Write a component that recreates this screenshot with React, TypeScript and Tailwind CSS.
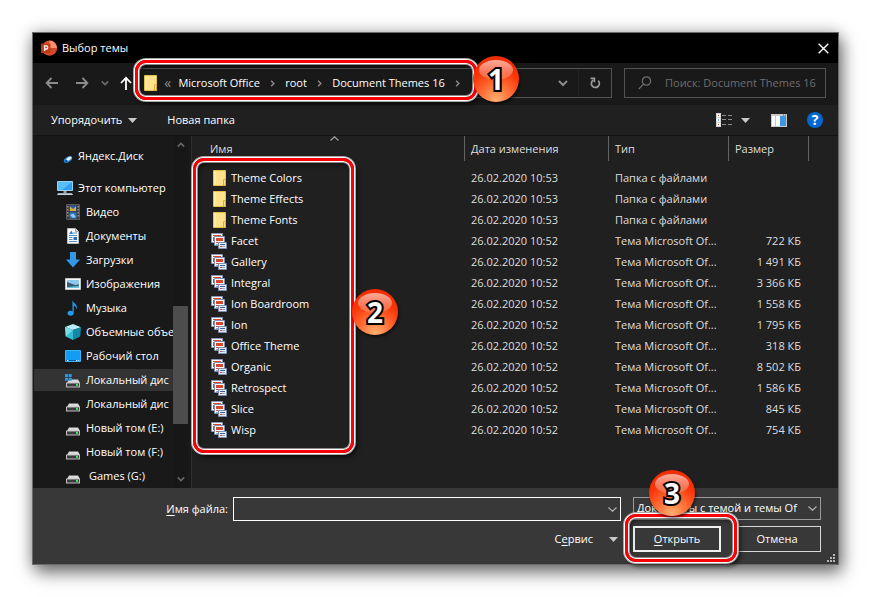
import React from "react";

type IconName =
  | "yandex"
  | "computer"
  | "video"
  | "document"
  | "download"
  | "picture"
  | "music"
  | "cube"
  | "desktop"
  | "system-drive"
  | "drive";

type Place = { id: string; label: string; icon: IconName; level: 0 | 1; selected?: boolean; gapAfter?: boolean; indent?: boolean };
type FileRow = { name: string; date: string; kind: "folder" | "theme"; size?: string };

const places: Place[] = [
  { id: "yandex", label: "Яндекс.Диск", icon: "yandex", level: 0, gapAfter: true },
  { id: "computer", label: "Этот компьютер", icon: "computer", level: 0 },
  { id: "video", label: "Видео", icon: "video", level: 1 },
  { id: "documents", label: "Документы", icon: "document", level: 1 },
  { id: "downloads", label: "Загрузки", icon: "download", level: 1 },
  { id: "pictures", label: "Изображения", icon: "picture", level: 1 },
  { id: "music", label: "Музыка", icon: "music", level: 1 },
  { id: "objects", label: "Объемные объе", icon: "cube", level: 1 },
  { id: "desktop", label: "Рабочий стол", icon: "desktop", level: 1 },
  { id: "c", label: "Локальный дис", icon: "system-drive", level: 1, selected: true },
  { id: "d", label: "Локальный дис", icon: "drive", level: 1 },
  { id: "e", label: "Новый том (E:)", icon: "drive", level: 1 },
  { id: "f", label: "Новый том (F:)", icon: "drive", level: 1 },
  { id: "g", label: "Games (G:)", icon: "drive", level: 1, indent: true },
];

const files: FileRow[] = [
  { name: "Theme Colors", date: "26.02.2020 10:53", kind: "folder" },
  { name: "Theme Effects", date: "26.02.2020 10:53", kind: "folder" },
  { name: "Theme Fonts", date: "26.02.2020 10:53", kind: "folder" },
  { name: "Facet", date: "26.02.2020 10:52", kind: "theme", size: "722 КБ" },
  { name: "Gallery", date: "26.02.2020 10:52", kind: "theme", size: "1 491 КБ" },
  { name: "Integral", date: "26.02.2020 10:52", kind: "theme", size: "3 366 КБ" },
  { name: "Ion Boardroom", date: "26.02.2020 10:52", kind: "theme", size: "1 558 КБ" },
  { name: "Ion", date: "26.02.2020 10:52", kind: "theme", size: "1 795 КБ" },
  { name: "Office Theme", date: "26.02.2020 10:52", kind: "theme", size: "318 КБ" },
  { name: "Organic", date: "26.02.2020 10:52", kind: "theme", size: "8 502 КБ" },
  { name: "Retrospect", date: "26.02.2020 10:52", kind: "theme", size: "1 586 КБ" },
  { name: "Slice", date: "26.02.2020 10:52", kind: "theme", size: "845 КБ" },
  { name: "Wisp", date: "26.02.2020 10:52", kind: "theme", size: "754 КБ" },
];

function Chevron({ dir, size = 8, className = "" }: { dir: "up" | "down" | "right"; size?: number; className?: string }) {
  const d = { up: "M1 7 L5 3 L9 7", down: "M1 3 L5 7 L9 3", right: "M3 1 L7 5 L3 9" }[dir];
  return (
    <svg width={size} height={size} viewBox="0 0 10 10" className={className} fill="none" stroke="currentColor" strokeWidth="2" aria-hidden="true">
      <path d={d} />
    </svg>
  );
}

function Triangle() {
  return (
    <svg width="9" height="5" viewBox="0 0 9 5" className="shrink-0" aria-hidden="true">
      <path d="M0 0 H9 L4.5 5 Z" fill="#c8c8c8" />
    </svg>
  );
}

function FolderIcon() {
  return (
    <svg width="13" height="16" viewBox="0 0 13 16" className="shrink-0" aria-hidden="true">
      <path d="M0.5 0.5 H12.5 V15.5 H0.5 Z" fill="#ffe28a" stroke="#e8c04a" />
      <path d="M1 1 H3 V15 H1 Z" fill="#ffeaa5" />
      <path d="M10.5 9.5 H12.5 V15.5 H10.5 Z" fill="#ffe28a" stroke="#d9ac35" />
    </svg>
  );
}

function ThemeIcon() {
  return (
    <svg width="16" height="16" viewBox="0 0 16 16" className="shrink-0" aria-hidden="true">
      <path d="M0.5 0.5 H11.5 V9.5 H0.5 Z" fill="#fff" stroke="#8798b8" />
      <path d="M2 2 H10 V3 H2 Z M2 4 H3 V8 H2 Z" fill="#d9482b" />
      <path d="M3.5 3.5 H13.5 V12.5 H3.5 Z" fill="#fff" stroke="#7d8fb3" />
      <path d="M5 5 H12 V8 H5 Z M5 9 H8 V10 H5 Z" fill="#d9482b" />
      <path d="M7.5 9.5 H15.5 V15.5 H7.5 Z" fill="#e6edf8" stroke="#7d8fb3" />
      <path d="M9 11 H14 V12 H9 Z" fill="#3f5f9c" />
      <path d="M9 13 H11 V14 H9 Z" fill="#d9482b" />
      <path d="M11 13 H14 V14 H11 Z M5 11 H7 V12 H5 Z" fill="#8ea6d0" />
    </svg>
  );
}

function Drive({ windows = false }: { windows?: boolean }) {
  return (
    <>
      <path d="M4 7.5 H13 L15 11 H2 Z" fill="#d9d9d9" />
      <path d="M1 10.5 H15 V15.5 H1 Z" fill="#bdbdbd" />
      <path d="M2 11.5 H14 V14.5 H2 Z" fill="#3c3c3c" />
      <path d="M11 12 H13 V14 H11 Z" fill="#35e64a" />
      {windows && <path d="M0 2 H3 V5 H0 Z M3.7 2 H6.7 V5 H3.7 Z M0 5.7 H3 V8.7 H0 Z M3.7 5.7 H6.7 V8.7 H3.7 Z" fill="#1e9bf0" />}
    </>
  );
}

function PlaceIcon({ name }: { name: IconName }) {
  const art: Record<IconName, React.ReactNode> = {
    yandex: (
      <>
        <ellipse cx="11" cy="11.5" rx="4.6" ry="2.6" transform="rotate(-32 11 11.5)" fill="#1c8be0" />
        <ellipse cx="11.8" cy="10.8" rx="3.2" ry="1.5" transform="rotate(-32 11.8 10.8)" fill="#e8f6ff" />
        <circle cx="9.3" cy="13" r="1.2" fill="#0d4e9c" />
      </>
    ),
    computer: (
      <>
        <path d="M0.5 1.5 H15.5 V10.5 H0.5 Z" fill="#2ea0ee" stroke="#9ad0f4" />
        <path d="M1 2 H15 L5 10 H1 Z" fill="#59bdf8" />
        <path d="M6.5 11 H9.5 V13 H6.5 Z" fill="#9aa7b3" />
        <path d="M1 13.2 H15 L16 15 H0 Z" fill="#c9d6e0" />
      </>
    ),
    video: (
      <>
        <path d="M1.5 0.5 H14.5 V15.5 H1.5 Z" fill="#3a3a3a" stroke="#5a5a5a" />
        <path d="M4.5 1.5 H11.5 V7.5 H4.5 Z" fill="#2c5fb0" />
        <path d="M4.5 8.5 H11.5 V14.5 H4.5 Z" fill="#2878c8" />
        <path d="M5 2.5 L8 5 L11 2.5 V7 H5 Z" fill="#d8a93a" />
        <path d="M5 11 L8 9.5 L11 13 L8 14 Z" fill="#9cc8ee" />
        <path d="M2.2 2 H3.4 V3.4 H2.2 Z M2.2 5 H3.4 V6.4 H2.2 Z M2.2 8 H3.4 V9.4 H2.2 Z M2.2 11 H3.4 V12.4 H2.2 Z M12.6 2 H13.8 V3.4 H12.6 Z M12.6 5 H13.8 V6.4 H12.6 Z M12.6 8 H13.8 V9.4 H12.6 Z M12.6 11 H13.8 V12.4 H12.6 Z" fill="#a8a8a8" />
      </>
    ),
    document: (
      <>
        <path d="M2.5 0.5 H10.5 L13.5 3.5 V15.5 H2.5 Z" fill="#fdfdfd" stroke="#b9b9b9" />
        <path d="M10.5 0.5 V3.5 H13.5" fill="#ddd" stroke="#a5a5a5" />
        <path d="M4 6 L6.5 2.5 L8 6 Z" fill="#2d7fc6" />
        <path d="M4 7 H12 V8 H4 Z M4 9 H7.5 V10 H4 Z M4 11 H7.5 V12 H4 Z M4 13 H12 V14 H4 Z M8 4.5 H12 V5.5 H8 Z" fill="#4a90cf" />
        <path d="M8.5 9 H12 V12 H8.5 Z" fill="#2d6aa8" />
      </>
    ),
    download: <path d="M5 0 H11 V7.5 H15 L8 15.5 L1 7.5 H5 Z" fill="#3298ea" />,
    picture: (
      <>
        <path d="M0.5 2.5 H15.5 V13.5 H0.5 Z" fill="#f6f6f6" stroke="#c4c4c4" />
        <path d="M2 4 H14 V12 H2 Z" fill="#8ec8ee" />
        <path d="M2 6 L6 7.5 L10 9 L14 8.5 V12 H2 Z" fill="#35596f" />
        <path d="M2 11 L14 10 V12 H2 Z" fill="#6cc0d8" />
      </>
    ),
    music: (
      <path d="M7.5 0 C8 3.5 13.5 4.5 11.5 9.5 C11.5 7 10 6 8.8 5.6 V12.5 C8.8 17 2 16.5 2.5 13 C3 10.6 6 10.4 7.5 11.4 Z" fill="#1f9df5" />
    ),
    cube: (
      <>
        <path d="M8 0 L16 3.2 L8 6 L0 3 Z" fill="#b8eef5" />
        <path d="M0 3 L8 6 V16 L0.8 12.4 Z" fill="#35bcd6" />
        <path d="M16 3.2 L8 6 V16 L15.2 12.4 Z" fill="#128aa6" />
        <path d="M0 3 L8 6 L0.8 12.4 Z" fill="#7bdcea" />
      </>
    ),
    desktop: (
      <>
        <path d="M0.5 2.5 H15.5 V13.5 H0.5 Z" fill="#129cf4" stroke="#3db4ff" />
        <path d="M1 12 H15 V13 H1 Z" fill="#0b5f9e" />
        <path d="M2 12 H3.4 V13 H2 Z M11 12 H12.4 V13 H11 Z M13.2 12 H14.4 V13 H13.2 Z" fill="#d8efff" />
      </>
    ),
    "system-drive": <Drive windows />,
    drive: <Drive />,
  };
  return (
    <svg width="16" height="16" viewBox="0 0 16 16" className="shrink-0" aria-hidden="true">
      {art[name]}
    </svg>
  );
}

function Ring({ className }: { className: string }) {
  return (
    <span
      aria-hidden="true"
      className={`pointer-events-none absolute rounded-[11px] border-3 border-[#fb0007] shadow-[0_0_0_1px_#fff,0_0_0_2px_#a8a8a8,inset_0_0_0_1px_#fff,inset_0_0_0_2px_#8a8a8a,3px_4px_5px_rgba(0,0,0,0.65),inset_2px_3px_5px_rgba(0,0,0,0.6)] ${className}`}
    />
  );
}

function Badge({ n, className }: { n: number; className: string }) {
  return (
    <span
      className={`pointer-events-none absolute flex size-[46px] items-center justify-center rounded-full bg-[radial-gradient(circle_at_50%_95%,#ffb070_0%,#ff7038_30%,#fa3406_62%,#e82800_100%)] shadow-[1px_2px_3px_rgba(0,0,0,0.6)] ${className}`}
    >
      <span className="absolute inset-x-1.5 top-1 h-5 rounded-[50%] bg-linear-to-b from-white/60 to-white/15" />
      <span className="relative text-[28px] leading-none font-bold text-white [-webkit-text-stroke:4px_#000] [paint-order:stroke]">{n}</span>
    </span>
  );
}

function TitleBar() {
  return (
    <header className="flex h-[30px] items-center bg-black pr-[7px] pl-2">
      <svg width="16" height="16" viewBox="0 0 16 16" className="shrink-0" aria-hidden="true">
        <circle cx="8.5" cy="8" r="7.5" fill="#d35230" />
        <path d="M8.5 0.5 A7.5 7.5 0 0 1 16 8 H8.5 Z" fill="#ff8f6b" />
        <path d="M1 8 H16 A7.5 7.5 0 0 1 1 8 Z" fill="#d04a2a" />
        <rect x="0" y="3.5" width="9.5" height="9.5" rx="1" fill="#c13b1b" />
        <path d="M3.6 11 V5.8 H5.2 A1.6 1.6 0 0 1 5.2 9 H3.6" fill="none" stroke="#fff" strokeWidth="1.3" />
      </svg>
      <h1 className="ml-[5px] flex-1">Выбор темы</h1>
      <button type="button" aria-label="Закрыть" className="flex size-[15px] items-center justify-center">
        <svg width="11" height="11" viewBox="0 0 11 11" stroke="#fff" strokeWidth="1.4" aria-hidden="true">
          <path d="M0.7 0.7 L10.3 10.3 M10.3 0.7 L0.7 10.3" />
        </svg>
      </button>
    </header>
  );
}

function Arrow({ d }: { d: string }) {
  return (
    <svg width="14" height="14" viewBox="0 0 14 14" fill="none" stroke="currentColor" strokeWidth="1.8" aria-hidden="true">
      <path d={d} />
    </svg>
  );
}

function CrumbArrow() {
  return (
    <span className="flex w-[26px] justify-center text-[#8c8c8c]">
      <Chevron dir="right" size={7} />
    </span>
  );
}

function NavBar() {
  return (
    <div className="flex h-[42px] items-center bg-[#191919] pr-3 pb-0.5 pl-1">
      <button type="button" aria-label="Назад" className="flex w-[30px] justify-center text-[#8c8c8c]">
        <Arrow d="M13 7 H2 M6.5 2 L1.6 7 L6.5 12" />
      </button>
      <button type="button" aria-label="Вперёд" className="flex w-[30px] justify-center text-[#8c8c8c]">
        <Arrow d="M1 7 H12 M7.5 2 L12.4 7 L7.5 12" />
      </button>
      <button type="button" aria-label="Журнал" className="flex w-4 justify-center text-[#6e6e6e]">
        <Chevron dir="down" />
      </button>
      <button type="button" aria-label="Вверх" className="flex w-[26px] justify-center text-white">
        <Arrow d="M7 14 V2 M2 7 L7 1.8 L12 7" />
      </button>
      <div className="mr-3 flex h-[30px] flex-1 items-stretch border border-[#535353]">
        <nav aria-label="Путь" className="relative flex w-[330px] shrink-0 items-center pl-1 whitespace-nowrap text-white">
          <FolderIcon />
          <span className="w-[22px] text-center text-sm text-[#8c8c8c]">«</span>
          <button type="button">Microsoft Office</button>
          <CrumbArrow />
          <button type="button">root</button>
          <CrumbArrow />
          <button type="button">Document Themes 16</button>
          <CrumbArrow />
          <Ring className="-top-[9px] -right-[7px] -bottom-[3px] -left-[5px]" />
          <Badge n={1} className="-top-[13px] -right-[49px] z-10" />
        </nav>
        <button type="button" aria-label="Предыдущие расположения" className="ml-auto flex w-[31px] items-center justify-center text-[#8c8c8c]">
          <Chevron dir="down" size={10} />
        </button>
        <button type="button" aria-label="Обновить" className="flex w-[33px] items-center justify-center border-l border-[#222] text-[#9a9a9a]">
          <svg width="12" height="12" viewBox="0 0 12 12" fill="none" stroke="currentColor" strokeWidth="1.7" aria-hidden="true">
            <path d="M9.2 3.6 A4 4 0 1 1 4.4 3" />
            <path d="M1.6 1.4 H5.4 V5.2" />
          </svg>
        </button>
      </div>
      <label className="flex h-[30px] w-[202px] items-center border border-[#535353] pl-[13px] text-[#6e6e6e]">
        <svg width="14" height="14" viewBox="0 0 14 14" fill="none" stroke="currentColor" strokeWidth="1.2" className="shrink-0" aria-hidden="true">
          <circle cx="8.5" cy="5" r="4.2" />
          <path d="M5.5 8.2 L0.8 13" />
        </svg>
        <input type="text" aria-label="Поиск" placeholder="Поиск: Document Themes 16" className="ml-[13px] w-full min-w-0 bg-transparent outline-none placeholder:text-[#6e6e6e]" />
      </label>
    </div>
  );
}

function Toolbar() {
  return (
    <div className="flex h-[31px] items-center border-b border-[#141414] bg-[#202020] pr-[15px] pl-[18px]">
      <button type="button" className="flex items-center gap-1.5">Упорядочить <Triangle /></button>
      <button type="button" className="ml-[30px]">Новая папка</button>
      <button type="button" aria-label="Вид" className="ml-auto flex items-center gap-[9px]">
        <svg width="16" height="14" viewBox="0 0 16 14" aria-hidden="true">
          <path d="M0 0 H5 V14 H0 Z" fill="#d8d8d8" />
          <path d="M1 1 H4 V4 H1 Z M1 5.5 H4 V8.5 H1 Z M1 10 H4 V13 H1 Z" fill="#fff" />
          <path d="M2 2 H3 V3 H2 Z M2 11 H3 V12 H2 Z" fill="#c8402a" />
          <path d="M2 6.5 H3 V7.5 H2 Z" fill="#2a62c0" />
          <path d="M6 2 H10 V3 H6 Z M12 2 H16 V3 H12 Z M6 6 H10 V7 H6 Z M12 6 H16 V7 H12 Z M6 11 H10 V12 H6 Z M12 11 H16 V12 H12 Z" fill="#8c8c8c" />
        </svg>
        <Triangle />
      </button>
      <button type="button" aria-label="Область просмотра" className="ml-[21px]">
        <svg width="16" height="13" viewBox="0 0 16 13" className="block" aria-hidden="true">
          <path d="M0 0 H16 V13 H0 Z" fill="#c9c9c9" />
          <path d="M1 2 H4 V12 H1 Z M5 2 H9 V12 H5 Z" fill="#fff" />
          <path d="M9 2 H15 V12 H9 Z" fill="#3d97e3" />
          <path d="M12 0.5 H13 V1.5 H12 Z M14 0.5 H15 V1.5 H14 Z" fill="#555" />
        </svg>
      </button>
      <button type="button" aria-label="Справка" className="ml-5 flex size-4 items-center justify-center rounded-full bg-[#0369cf] text-sm leading-none font-bold text-white">?</button>
    </div>
  );
}

function Sidebar() {
  return (
    <aside className="flex w-[159px] shrink-0 border-r border-[#2d2d2d] bg-[#191919] pr-[3px]">
      <ul className="min-w-0 flex-1 pt-2">
        {places.map((p) => (
          <li key={p.id} className={p.gapAfter ? "mb-2 py-px" : "py-px"}>
            <button
              type="button"
              className={`ml-px flex h-[22px] w-[139px] items-center overflow-hidden text-left whitespace-nowrap ${p.level ? "pl-[31px]" : "pl-[23px]"} ${p.selected ? "bg-[#333]" : ""}`}
            >
              <PlaceIcon name={p.icon} />
              <span className={p.indent ? "ml-2" : "ml-[5px]"}>{p.label}</span>
            </button>
          </li>
        ))}
      </ul>
      <div className="flex w-[15px] flex-col items-center bg-[#171717] text-[#6a6a6a]">
        <span className="flex h-[18px] items-center"><Chevron dir="up" /></span>
        <span className="mt-[152px] h-[118px] w-full bg-[#4d4d4d]" />
        <span className="mt-auto flex h-[18px] items-center"><Chevron dir="down" /></span>
      </div>
    </aside>
  );
}

function ColumnTitle({ children }: { children?: React.ReactNode }) {
  return (
    <th className="p-0 font-normal">
      <div className="flex h-[25px] items-center border-l border-[#636363] pt-0.5 pl-1.5">{children}</div>
    </th>
  );
}

function FileList() {
  return (
    <main className="relative min-w-0 flex-1 bg-[#202020]">
      <table className="w-full table-fixed border-collapse text-left">
        <colgroup>
          <col />
          <col className="w-36" />
          <col className="w-[120px]" />
          <col className="w-20" />
          <col className="w-[30px]" />
        </colgroup>
        <thead>
          <tr className="h-[31px] align-top text-[#dedede]">
            <th className="relative p-0 font-normal">
              <div className="flex h-[25px] items-center pt-0.5 pl-[18px]">Имя</div>
              <svg width="9" height="5" viewBox="0 0 9 5" fill="none" stroke="#a0a0a0" strokeWidth="1.2" className="absolute top-0 left-[138px]" aria-hidden="true"><path d="M0.5 4.5 L4.5 0.7 L8.5 4.5" /></svg>
            </th>
            <ColumnTitle>Дата изменения</ColumnTitle>
            <ColumnTitle>Тип</ColumnTitle>
            <ColumnTitle>Размер</ColumnTitle>
            <ColumnTitle />
          </tr>
        </thead>
        <tbody>
          {files.map((f) => (
            <tr key={f.name} className="h-[21px] text-[#dedede]">
              <td className="p-0">
                <span className="flex h-[21px] items-center pl-[19px] text-white">
                  {f.kind === "folder" ? (
                    <span className="flex w-5 pl-0.5"><FolderIcon /></span>
                  ) : (
                    <span className="flex w-5"><ThemeIcon /></span>
                  )}
                  <span className="pt-0.5">{f.name}</span>
                </span>
              </td>
              <td className="p-0 pt-0.5 pl-[7px] whitespace-nowrap">{f.date}</td>
              <td className="p-0 pt-0.5 pl-[7px] whitespace-nowrap">{f.kind === "folder" ? "Папка с файлами" : "Тема Microsoft Of..."}</td>
              <td className="p-0 pt-0.5 pr-[7px] text-right whitespace-nowrap">{f.size}</td>
              <td className="p-0" />
            </tr>
          ))}
        </tbody>
      </table>
      <Ring className="top-[22px] left-px h-[295px] w-[161px]" />
      <Badge n={2} className="top-[153px] left-[160px] z-10" />
    </main>
  );
}

function Footer() {
  return (
    <footer className="relative bg-[#383838] pt-[9px] pr-[17px] pb-3">
      <div className="flex items-start">
        <label htmlFor="file-name" className="w-[195px] text-right leading-6"><span className="underline underline-offset-2">И</span>мя файла:</label>
        <div className="ml-[5px] flex h-6 min-w-0 flex-1 border border-white">
          <input id="file-name" type="text" className="min-w-0 flex-1 bg-transparent px-1 outline-none" />
          <button type="button" aria-label="Показать список" className="flex w-4 items-center justify-center text-[#b0b0b0]">
            <svg width="9" height="5" viewBox="0 0 9 5" fill="none" stroke="currentColor" strokeWidth="1.2" aria-hidden="true"><path d="M0.5 0.5 L4.5 4.3 L8.5 0.5" /></svg>
          </button>
        </div>
        <div className="relative ml-3 w-[188px]">
          <select aria-label="Тип файлов" className="h-[23px] w-full appearance-none overflow-hidden border border-[#9b9b9b] bg-[#383838] pr-[19px] pl-[3px] outline-none">
            <option>Документы с темой и темы Of</option>
          </select>
          <svg width="9" height="5" viewBox="0 0 9 5" fill="none" stroke="#b0b0b0" strokeWidth="1.2" className="pointer-events-none absolute top-[9px] right-1" aria-hidden="true"><path d="M0.5 0.5 L4.5 4.3 L8.5 0.5" /></svg>
        </div>
      </div>
      <div className="mt-[5px] flex items-center justify-end">
        <button type="button" className="mr-[15px] flex items-center gap-4">
          <span>С<span className="underline underline-offset-2">е</span>рвис</span>
          <Triangle />
        </button>
        <div className="relative mr-3">
          <button type="button" className="block h-[26px] w-[88px] border-2 border-[#f0f0f0] leading-[22px]"><span className="underline underline-offset-2">О</span>ткрыть</button>
          <Ring className="-top-3 -left-2 z-10 h-12 w-28" />
          <Badge n={3} className="-top-14 left-4 z-20" />
        </div>
        <button type="button" className="h-[26px] w-[88px] border border-[#d8d8d8]">Отмена</button>
      </div>
      <svg width="8" height="8" viewBox="0 0 8 8" className="absolute right-[3px] bottom-[2px]" fill="#b5b5b5" aria-hidden="true">
        <path d="M6 0 H8 V2 H6 Z M3 3 H5 V5 H3 Z M6 3 H8 V5 H6 Z M0 6 H2 V8 H0 Z M3 6 H5 V8 H3 Z M6 6 H8 V8 H6 Z" />
      </svg>
    </footer>
  );
}

export default function App() {
  return (
    <div className="bg-white p-8 font-['Open_Sans','Noto_Sans',sans-serif] text-[11px] text-white">
      <section aria-label="Выбор темы" className="border border-[#6b6b6b] shadow-[3px_8px_16px_rgba(0,0,0,0.5),0_0_14px_rgba(0,0,0,0.25)]">
        <TitleBar />
        <NavBar />
        <Toolbar />
        <div className="flex h-[352px]">
          <Sidebar />
          <FileList />
        </div>
        <Footer />
      </section>
    </div>
  );
}
